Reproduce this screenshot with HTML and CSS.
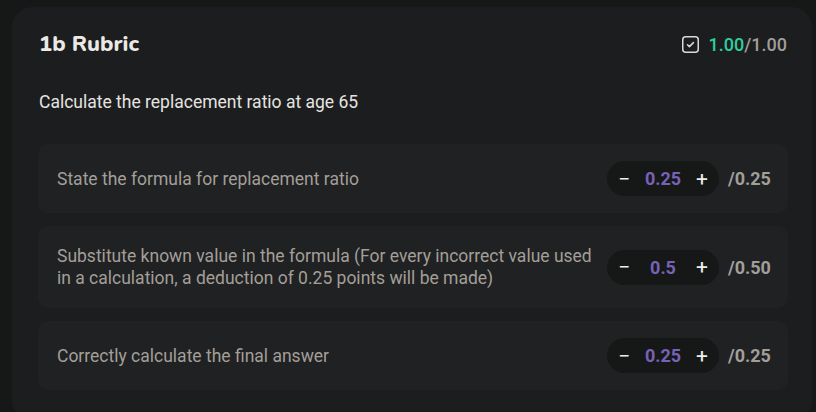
FILE: index.html
```html
<!DOCTYPE html>
<html lang="en">
<head>
<meta charset="utf-8">
<title>1b Rubric</title>
<link rel="stylesheet" href="styles.css">
</head>
<body>
<div class="card">
  <div class="header">
    <h1 class="title">1b Rubric</h1>
    <div class="total">
      <svg class="check-icon" width="17" height="17" viewBox="0 0 17 17" aria-hidden="true">
        <rect x="0.75" y="0.75" width="15.5" height="15.5" rx="3" fill="none" stroke="#dcdad6" stroke-width="1.5"/>
        <polyline points="5.5,8.8 7.4,10.6 11.4,6.6" fill="none" stroke="#dcdad6" stroke-width="1.5" stroke-linecap="round" stroke-linejoin="round"/>
      </svg>
      <span class="score"><span class="got">1.00</span>/1.00</span>
    </div>
  </div>
  <p class="prompt">Calculate the replacement ratio at age 65</p>
  <div class="rows">
    <div class="row">
      <div class="row-text">State the formula for replacement ratio</div>
      <div class="controls">
        <div class="stepper"><span class="btn">−</span><span class="val">0.25</span><span class="btn">+</span></div>
        <span class="max">/0.25</span>
      </div>
    </div>
    <div class="row">
      <div class="row-text">Substitute known value in the formula (For every incorrect value used in a calculation, a deduction of 0.25 points will be made)</div>
      <div class="controls">
        <div class="stepper"><span class="btn">−</span><span class="val">0.5</span><span class="btn">+</span></div>
        <span class="max">/0.50</span>
      </div>
    </div>
    <div class="row">
      <div class="row-text">Correctly calculate the final answer</div>
      <div class="controls">
        <div class="stepper"><span class="btn">−</span><span class="val">0.25</span><span class="btn">+</span></div>
        <span class="max">/0.25</span>
      </div>
    </div>
  </div>
</div>
</body>
</html>
```
FILE: styles.css
```css
html, body {
  margin: 0;
  background: #161717;
}
body {
  padding: 7px 4px 0 12px;
  font-family: Roboto, "Liberation Sans", sans-serif;
  height: 412px;
  box-sizing: border-box;
  overflow: hidden;
}
.card {
  width: 800px;
  box-sizing: border-box;
  background: #1c1d1f;
  border-radius: 20px;
  padding: 22px 24px 30px 26px;
}
.header {
  display: flex;
  align-items: center;
  justify-content: space-between;
  height: 30px;
}
.title {
  margin: 0;
  font-family: "Nunito", Lato, "Open Sans", sans-serif;
  font-weight: 800;
  font-size: 22px;
  color: #ebe9e5;
  padding-left: 1px;
}
.total {
  display: flex;
  align-items: center;
  gap: 10px;
  padding-right: 1px;
}
.check-icon {
  display: block;
}
.score {
  font-size: 18px;
  font-weight: 500;
  color: #a29e98;
}
.got {
  color: #2ecf9b;
}
.prompt {
  margin: 31px 0 30px 1px;
  font-size: 17.5px;
  line-height: 24px;
  color: #e6e4e0;
}
.rows {
  display: flex;
  flex-direction: column;
  gap: 13px;
}
.row {
  display: flex;
  align-items: center;
  justify-content: space-between;
  gap: 14px;
  background: #202123;
  border-radius: 10px;
  padding: 17px 16px 17px 19px;
}
.row-text {
  font-size: 17.5px;
  line-height: 22px;
  padding: 2px 0;
  color: #a39f98;
  flex: 1;
}
.controls {
  display: flex;
  align-items: center;
  gap: 9px;
  flex-shrink: 0;
}
.stepper {
  display: flex;
  align-items: center;
  width: 112px;
  height: 35px;
  box-sizing: border-box;
  padding: 0 5px;
  border-radius: 18px;
  background: #161717;
}
.btn {
  width: 24px;
  text-align: center;
  color: #eeeeee;
  font-size: 21px;
  font-weight: 400;
  line-height: 24px;
}
.val {
  flex: 1;
  text-align: center;
  color: #7762b6;
  font-size: 18px;
  font-weight: 700;
}
.max {
  font-size: 18px;
  font-weight: 700;
  color: #a29e98;
  width: 44px;
}
```
